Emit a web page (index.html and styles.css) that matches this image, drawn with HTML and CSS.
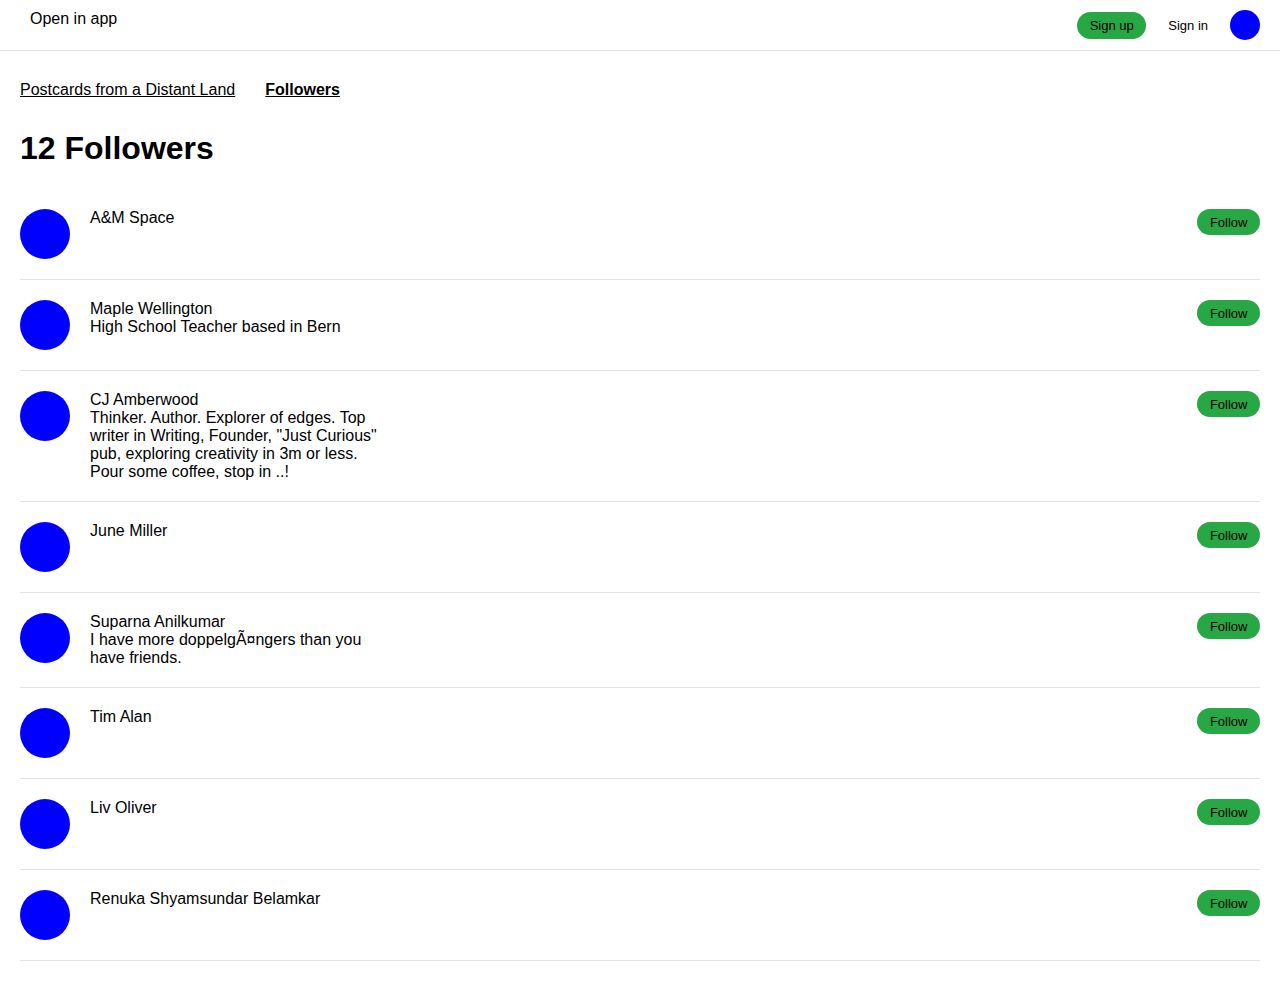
FILE: index.html
```html
<!DOCTYPE html>
<html lang="en">
<head>
<meta charset="utf-8">
<title>Followers</title>
<link rel="stylesheet" href="styles.css">
</head>
<body>
<header class="topbar">
  <div class="topbar-left">Open in app</div>
  <div class="topbar-right">
    <a class="btn-signup" href="#">Sign up</a>
    <a class="signin" href="#">Sign in</a>
    <span class="avatar-sm"></span>
  </div>
</header>
<main class="main">
  <nav class="crumbs">
    <a href="#">Postcards from a Distant Land</a>
    <a href="#" class="current">Followers</a>
  </nav>
  <h1 class="title">12 Followers</h1>
  <ul class="list">
    <li class="row"><span class="avatar"></span><div class="info"><div>A&amp;M Space</div></div><button class="follow">Follow</button></li>
    <li class="row"><span class="avatar"></span><div class="info"><div>Maple Wellington</div><div>High School Teacher based in Bern</div></div><button class="follow">Follow</button></li>
    <li class="row"><span class="avatar"></span><div class="info"><div>CJ Amberwood</div><div>Thinker. Author. Explorer of edges. Top writer in Writing, Founder, "Just Curious" pub, exploring creativity in 3m or less. Pour some coffee, stop in ..!</div></div><button class="follow">Follow</button></li>
    <li class="row"><span class="avatar"></span><div class="info"><div>June Miller</div></div><button class="follow">Follow</button></li>
    <li class="row"><span class="avatar"></span><div class="info"><div>Suparna Anilkumar</div><div>I have more doppelgÃ¤ngers than you have friends.</div></div><button class="follow">Follow</button></li>
    <li class="row"><span class="avatar"></span><div class="info"><div>Tim Alan</div></div><button class="follow">Follow</button></li>
    <li class="row"><span class="avatar"></span><div class="info"><div>Liv Oliver</div></div><button class="follow">Follow</button></li>
    <li class="row"><span class="avatar"></span><div class="info"><div>Renuka Shyamsundar Belamkar</div></div><button class="follow">Follow</button></li>
  </ul>
</main>
</body>
</html>
```
FILE: styles.css
```css
* { box-sizing: border-box; }
body {
  margin: 0;
  font-family: "Liberation Sans", Arial, sans-serif;
  color: #000;
  background: #fff;
}
a { color: #000; }
.topbar {
  display: flex;
  justify-content: space-between;
  align-items: flex-start;
  height: 51px;
  border-bottom: 1px solid #e2e2e2;
}
.topbar-left {
  font-size: 16px;
  line-height: 18px;
  padding: 10px 30px 0;
}
.topbar-right {
  display: flex;
  align-items: center;
  gap: 22px;
  height: 50px;
  padding-right: 20px;
}
.btn-signup {
  display: inline-block;
  background: #28a745;
  color: #000;
  text-decoration: none;
  font-size: 13px;
  line-height: 27px;
  height: 27px;
  padding: 0 12.5px;
  border-radius: 14px;
}
.signin {
  font-size: 13px;
  text-decoration: none;
}
.avatar-sm {
  width: 30px;
  height: 30px;
  border-radius: 50%;
  background: #0000ff;
  display: block;
}
.main {
  padding: 0 20px;
}
.crumbs {
  display: flex;
  gap: 30px;
  margin-top: 30px;
  font-size: 16px;
  line-height: 18px;
}
.crumbs a { text-decoration: underline; }
.crumbs .current { font-weight: bold; }
.title {
  font-size: 32px;
  line-height: 37px;
  font-weight: bold;
  margin: 31px 0 22px;
}
.list {
  list-style: none;
  margin: 0;
  padding: 0;
}
.row {
  display: flex;
  align-items: flex-start;
  padding: 20px 0;
  border-bottom: 1px solid #e2e2e2;
}
.avatar {
  flex: none;
  width: 50px;
  height: 50px;
  border-radius: 50%;
  background: #0000ff;
  margin-right: 20px;
}
.info {
  width: 300px;
  font-size: 16px;
  line-height: 18px;
}
.follow {
  margin-left: auto;
  background: #28a745;
  border: none;
  color: #000;
  font-family: inherit;
  font-size: 13px;
  height: 26px;
  padding: 0 12.5px;
  border-radius: 13px;
}
```
